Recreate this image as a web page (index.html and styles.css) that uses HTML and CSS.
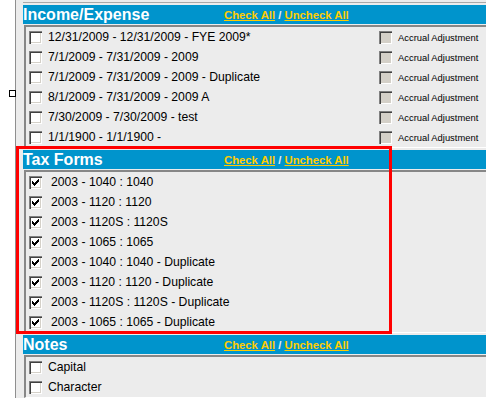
FILE: index.html
```html
<!DOCTYPE html>
<html>
<head>
<meta charset="utf-8">
<title>Report Options</title>
<link rel="stylesheet" href="styles.css">
</head>
<body>
<div class="frame">
  <div class="column">
    <div class="prev-end"></div>

    <section class="group">
      <div class="group-head">
        <span class="group-title">Income/Expense</span>
        <span class="group-links"><a href="#">Check All</a> / <a href="#">Uncheck All</a></span>
      </div>
      <div class="group-body">
        <div class="row"><label class="item"><span class="cb"></span><span>12/31/2009 - 12/31/2009 - FYE 2009*</span></label><label class="accrual"><span class="cb disabled"></span><span>Accrual Adjustment</span></label></div>
        <div class="row"><label class="item"><span class="cb"></span><span>7/1/2009 - 7/31/2009 - 2009</span></label><label class="accrual"><span class="cb disabled"></span><span>Accrual Adjustment</span></label></div>
        <div class="row"><label class="item"><span class="cb"></span><span>7/1/2009 - 7/31/2009 - 2009 - Duplicate</span></label><label class="accrual"><span class="cb disabled"></span><span>Accrual Adjustment</span></label></div>
        <div class="row"><label class="item"><span class="cb"></span><span>8/1/2009 - 7/31/2009 - 2009 A</span></label><label class="accrual"><span class="cb disabled"></span><span>Accrual Adjustment</span></label></div>
        <div class="row"><label class="item"><span class="cb"></span><span>7/30/2009 - 7/30/2009 - test</span></label><label class="accrual"><span class="cb disabled"></span><span>Accrual Adjustment</span></label></div>
        <div class="row"><label class="item"><span class="cb"></span><span>1/1/1900 - 1/1/1900 -</span></label><label class="accrual"><span class="cb disabled"></span><span>Accrual Adjustment</span></label></div>
      </div>
    </section>

    <section class="group tax">
      <div class="group-head">
        <span class="group-title">Tax Forms</span>
        <span class="group-links"><a href="#">Check All</a> / <a href="#">Uncheck All</a></span>
      </div>
      <div class="group-body">
        <div class="row"><label class="item"><span class="cb"><svg class="tick" viewBox="0 0 13 13"><polygon points="3,5 5,7 10,2 10,5 5,10 3,8"/></svg></span><span>2003 - 1040 : 1040</span></label></div>
        <div class="row"><label class="item"><span class="cb"><svg class="tick" viewBox="0 0 13 13"><polygon points="3,5 5,7 10,2 10,5 5,10 3,8"/></svg></span><span>2003 - 1120 : 1120</span></label></div>
        <div class="row"><label class="item"><span class="cb"><svg class="tick" viewBox="0 0 13 13"><polygon points="3,5 5,7 10,2 10,5 5,10 3,8"/></svg></span><span>2003 - 1120S : 1120S</span></label></div>
        <div class="row"><label class="item"><span class="cb"><svg class="tick" viewBox="0 0 13 13"><polygon points="3,5 5,7 10,2 10,5 5,10 3,8"/></svg></span><span>2003 - 1065 : 1065</span></label></div>
        <div class="row"><label class="item"><span class="cb"><svg class="tick" viewBox="0 0 13 13"><polygon points="3,5 5,7 10,2 10,5 5,10 3,8"/></svg></span><span>2003 - 1040 : 1040 - Duplicate</span></label></div>
        <div class="row"><label class="item"><span class="cb"><svg class="tick" viewBox="0 0 13 13"><polygon points="3,5 5,7 10,2 10,5 5,10 3,8"/></svg></span><span>2003 - 1120 : 1120 - Duplicate</span></label></div>
        <div class="row"><label class="item"><span class="cb"><svg class="tick" viewBox="0 0 13 13"><polygon points="3,5 5,7 10,2 10,5 5,10 3,8"/></svg></span><span>2003 - 1120S : 1120S - Duplicate</span></label></div>
        <div class="row"><label class="item"><span class="cb"><svg class="tick" viewBox="0 0 13 13"><polygon points="3,5 5,7 10,2 10,5 5,10 3,8"/></svg></span><span>2003 - 1065 : 1065 - Duplicate</span></label></div>
      </div>
    </section>

    <section class="group">
      <div class="group-head">
        <span class="group-title">Notes</span>
        <span class="group-links"><a href="#">Check All</a> / <a href="#">Uncheck All</a></span>
      </div>
      <div class="group-body">
        <div class="row"><label class="item"><span class="cb"></span><span>Capital</span></label></div>
        <div class="row"><label class="item"><span class="cb"></span><span>Character</span></label></div>
      </div>
    </section>
  </div>
</div>
<div class="marker"></div>
<div class="highlight"></div>
</body>
</html>
```

FILE: styles.css
```css
html, body {
  margin: 0;
  padding: 0;
}

body {
  width: 486px;
  height: 398px;
  overflow: hidden;
  position: relative;
  background: #ffffff;
  font-family: "Liberation Sans", Arial, sans-serif;
}

.frame {
  margin-left: 15px;
  border-left: 1px solid #8f8f8f;
  background: #ececec;
  height: 398px;
  padding-left: 7px;
  overflow: hidden;
}

.column {
  width: 520px;
}

.prev-end {
  height: 2px;
  border-bottom: 1px solid #a9a9a9;
  margin-bottom: 2px;
}

.group-head {
  height: 19px;
  background: #0094cc;
  display: flex;
  align-items: center;
}

.group-title {
  width: 201px;
  flex: none;
  color: #ffffff;
  font-weight: bold;
  font-size: 16px;
  line-height: 19px;
  white-space: nowrap;
}

.group-links {
  font-size: 11.3px;
  font-weight: bold;
  color: #e6eef3;
  white-space: nowrap;
}

.group-links a {
  color: #ffcc00;
  text-decoration: underline;
}

.group-body {
  margin: 1px 0 2px 1px;
  border-top: 2px solid #878787;
  border-left: 2px solid #878787;
  border-bottom: 1px solid #ffffff;
}

.row {
  height: 20px;
  display: flex;
  align-items: center;
}

.item {
  box-sizing: border-box;
  width: 353px;
  flex: none;
  padding-left: 3px;
  display: flex;
  align-items: center;
  font-size: 12.2px;
  color: #000000;
  white-space: nowrap;
}

.cb {
  position: relative;
  flex: none;
  width: 13px;
  height: 13px;
  background: #ffffff;
  box-shadow: inset 1px 1px #808080, inset 2px 2px #404040, inset -1px -1px #ffffff, inset -2px -2px #d4d0c8;
  margin-right: 6px;
}

.cb.disabled {
  background: #d4d0c8;
}

.tax .item .cb {
  margin-right: 9px;
}

.tick {
  position: absolute;
  left: 0;
  top: 0;
  width: 13px;
  height: 13px;
  fill: #000000;
  shape-rendering: crispEdges;
}

.accrual {
  display: flex;
  align-items: center;
  font-size: 9.4px;
  color: #000000;
  white-space: nowrap;
}

.marker {
  position: absolute;
  left: 9px;
  top: 90px;
  width: 7px;
  height: 7px;
  box-sizing: border-box;
  border: 1px solid #000000;
  background: #ffffff;
}

.highlight {
  position: absolute;
  left: 16px;
  top: 146px;
  width: 376px;
  height: 188px;
  box-sizing: border-box;
  border: 3px solid #ff0000;
}
```
